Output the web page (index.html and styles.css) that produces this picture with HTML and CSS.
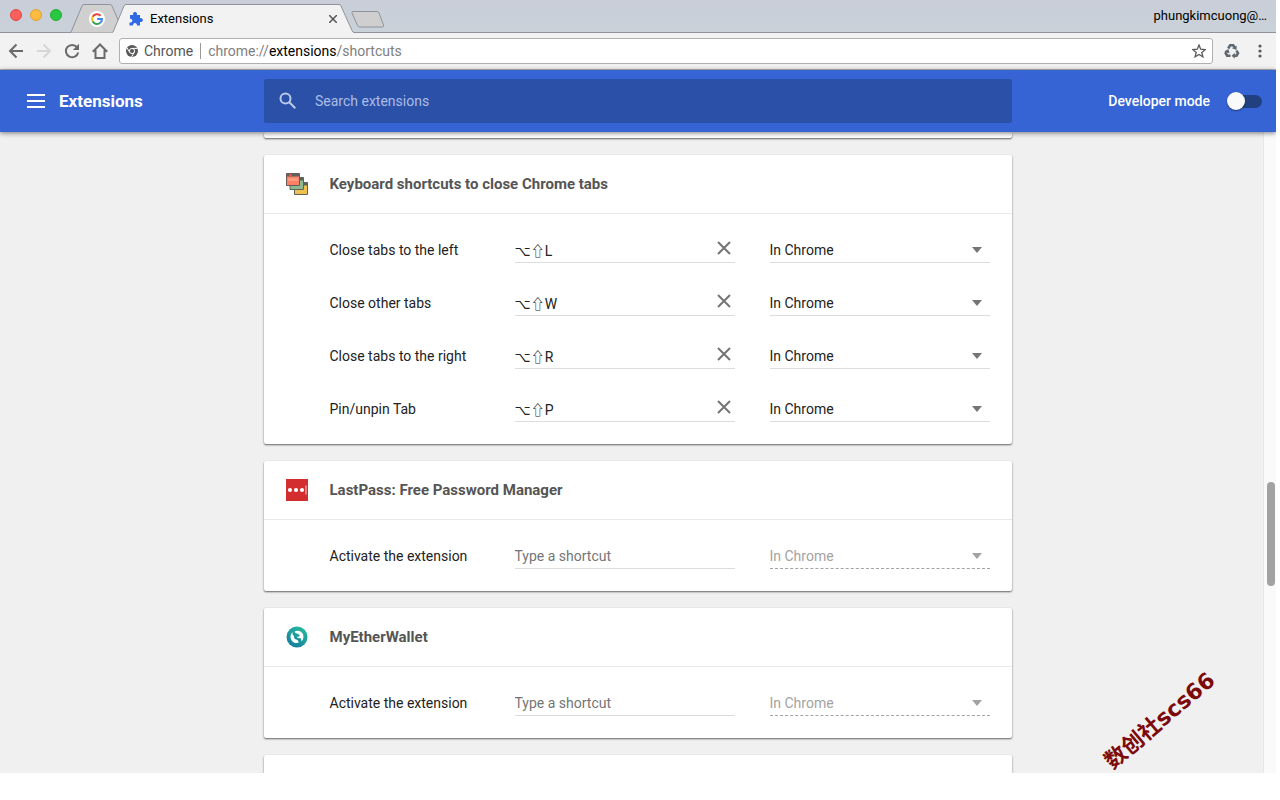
FILE: index.html
```html
<!DOCTYPE html>
<html lang="en">

<head>
    <meta charset="UTF-8">
    <meta name="viewport" content="width=device-width, initial-scale=1.0">
    <title>Extensions</title>
    <link rel="stylesheet" href="styles.css">
</head>

<body>
    <div class="window">
        <div class="titlebar">
            <div class="lights">
                <button class="light red" aria-label="Close"></button>
                <button class="light yellow" aria-label="Minimize"></button>
                <button class="light green" aria-label="Zoom"></button>
            </div>
            <div class="tabs">
                <button class="tab small" aria-label="Google">
                    <svg class="tab-shape" viewBox="0 0 55 29"><path d="M0 28.5C1 28.5 1 28 1.500 27L12 2Q12.800 .5 14 .5H40Q41.500 .5 42 2L53 27Q53.500 28.500 55 28.500" fill="#d0d0d0" stroke="#8f9399"/></svg>
                    <svg class="favicon google" width="16" height="16" viewBox="0 0 16 16"><circle cx="8" cy="8" r="8" fill="#fff"/><g fill="none" stroke-width="2"><path d="M11.600 4.700A5 5 0 0 0 3.600 5.700" stroke="#ea4335"/><path d="M3.600 5.700A5 5 0 0 0 3.600 10.300" stroke="#fbbc05"/><path d="M3.600 10.300A5 5 0 0 0 11.300 11.800" stroke="#34a853"/><path d="M11.300 11.800A5 5 0 0 0 13 8H8.200" stroke="#4285f4"/></g></svg>
                </button>
                <div class="tab active">
                    <svg class="tab-shape" viewBox="0 0 242 29"><path d="M0 29V28.500Q1 28.500 1.500 27L12 2Q12.800 .5 14 .5H227Q228.500 .5 229 2L240 26.500Q241 28.500 242 28.500V29" fill="#f2f2f2"/><path d="M0 28.500Q1 28.500 1.500 27L12 2Q12.800 .5 14 .5H227Q228.500 .5 229 2L240 26.500Q241 28.500 242 28.500" fill="none" stroke="#8f9399"/></svg>
                    <svg class="favicon" width="14" height="14" viewBox="0 0 14 14" fill="#2f6ae4"><path d="M1 3h3.300a2 2 0 1 1 3.400 0H11v3.300a2 2 0 1 1 0 3.600V13.500H7.800a1.900 1.900 0 1 0-3.600 0H0.500V10.300a1.900 1.900 0 1 0 .5-3.500z"/></svg>
                    <span class="tab-title">Extensions</span>
                    <button class="tab-close" aria-label="Close tab"><svg width="8" height="8" viewBox="0 0 8 8" stroke="#555" stroke-width="1.500"><path d="M0 0L8 8M8 0L0 8"/></svg></button>
                </div>
                <button class="new-tab" aria-label="New tab"><svg width="34" height="17" viewBox="0 0 34 17"><path d="M2 .5H26Q27.500 .5 28 2L32.500 14Q33 16 31.500 16H9Q7 16 6.500 14.500L1 2Q.500 .5 2 .5Z" fill="#cfcfcf" stroke="#8f9399"/></svg></button>
            </div>
            <span class="profile">phungkimcuong@…</span>
        </div>

        <div class="toolbar">
            <div class="nav">
                <button aria-label="Back"><svg width="16" height="16" viewBox="0 0 16 16" fill="none" stroke="#6a6a6a" stroke-width="2"><path d="M15 8H2.500M8.500 1.500L2 8L8.500 14.500"/></svg></button>
                <button aria-label="Forward"><svg width="16" height="16" viewBox="0 0 16 16" fill="none" stroke="#d6d6d6" stroke-width="2"><path d="M1 8H13.500M7.500 1.500L14 8L7.500 14.500"/></svg></button>
                <button aria-label="Reload"><svg width="16" height="16" viewBox="0 0 16 16"><path d="M13 4.200A6.200 6.200 0 1 0 14.200 9.500" fill="none" stroke="#6a6a6a" stroke-width="2"/><path d="M15 .8V7H8.800z" fill="#6a6a6a"/></svg></button>
                <button aria-label="Home"><svg width="16" height="16" viewBox="0 0 16 16" fill="none" stroke="#6a6a6a" stroke-width="2"><path d="M.800 8.700L8 1.500L15.200 8.700M3.500 7V15H12.500V7"/></svg></button>
            </div>
            <div class="omnibox">
                <svg width="12" height="12" viewBox="0 0 12 12"><circle cx="6" cy="6" r="6" fill="#5a5a5a"/><circle cx="6" cy="6" r="2.600" fill="#5a5a5a" stroke="#fff" stroke-width="1"/><path d="M6 3.400H11.500M3.700 7.300L1 2.800M8.300 7.300L5.500 12" stroke="#fff" stroke-width="1"/></svg>
                <span class="scheme-name">Chrome</span>
                <a class="url" href="#">chrome://<b>extensions</b>/shortcuts</a>
                <button aria-label="Bookmark"><svg width="14" height="14" viewBox="0 0 14 14"><path d="M7 1L8.700 5.200L13.200 5.500L9.800 8.400L10.900 12.800L7 10.400L3.100 12.800L4.200 8.400L.800 5.500L5.300 5.200z" fill="none" stroke="#5a5a5a" stroke-width="1.300"/></svg></button>
            </div>
            <button class="recycle" aria-label="Recycle"><svg width="16" height="16" viewBox="0 0 16 16"><g fill="none" stroke="#5f6870" stroke-width="2.600"><path d="M4.200 5.500L6.200 2.200H9.200L10.400 4.300"/><path d="M12.500 7.500L14 10.300L12.500 12.700H10.200"/><path d="M6.500 12.700H3.200L1.700 10.300L2.900 8.300"/></g><path d="M8 5.200L12.600 2.500V7zM10.800 9.700V15.800L7.600 12.700zM.300 8.500L4.300 6L5.600 10.200z" fill="#5f6870"/></svg></button>
            <button class="more" aria-label="Menu"><svg width="4" height="14" viewBox="0 0 4 14" fill="#5a5a5a"><circle cx="2" cy="2" r="1.600"/><circle cx="2" cy="7" r="1.600"/><circle cx="2" cy="12" r="1.600"/></svg></button>
        </div>

        <header class="header">
            <div class="header-left">
                <button class="menu" aria-label="Main menu"><svg width="18" height="14" viewBox="0 0 18 14" fill="#fff"><path d="M0 0H18V2H0zM0 6H18V8H0zM0 12H18V14H0z"/></svg></button>
                <h1>Extensions</h1>
            </div>
            <label class="search">
                <svg width="18" height="18" viewBox="0 0 18 18" fill="none" stroke="#bccaea" stroke-width="2"><circle cx="6.500" cy="6.500" r="5"/><path d="M10.300 10.300L16.300 16.300"/></svg>
                <input type="search" placeholder="Search extensions" aria-label="Search extensions">
            </label>
            <label class="dev-mode">
                Developer mode
                <input type="checkbox" class="toggle">
            </label>
        </header>

        <div class="content">
            <main class="cards">
                <section class="card previous"></section>

                <section class="card">
                    <div class="card-head">
                        <svg width="24" height="24" viewBox="0 0 24 24"><g stroke="#5c6656" stroke-width="1"><path d="M9.500 11.500H22.500V22.500H9.500z" fill="#efc04f"/><path d="M18 10.500H22.500V13H18z" fill="#59615a"/><path d="M5 6.500H18.500V17.500H5z" fill="#8db990"/><path d="M14 5.500H18.500V8H14z" fill="#59615a"/></g><path d="M1.500 1.500H14.500V13.500H1.500z" fill="#fb8065" stroke="#6b5a55"/><path d="M2 2H14V4.500H2z" fill="#5c6361"/><path d="M4 2H7V4.500H4z" fill="#e4513a"/><path d="M3 6H13V9H3z" fill="#ff9a7c"/></svg>
                        <h2>Keyboard shortcuts to close Chrome tabs</h2>
                    </div>
                    <div class="card-body">
                        <div class="row">
                            <label for="key1">Close tabs to the left</label>
                            <div class="field"><input type="text" id="key1" value="⌥⇧L"><button class="clear" aria-label="Clear"><svg width="14" height="14" viewBox="0 0 14 14" stroke="#757575" stroke-width="2"><path d="M1 1L13 13M13 1L1 13"/></svg></button></div>
                            <div class="field scope"><select aria-label="Scope"><option>In Chrome</option><option>Global</option></select></div>
                        </div>
                        <div class="row">
                            <label for="key2">Close other tabs</label>
                            <div class="field"><input type="text" id="key2" value="⌥⇧W"><button class="clear" aria-label="Clear"><svg width="14" height="14" viewBox="0 0 14 14" stroke="#757575" stroke-width="2"><path d="M1 1L13 13M13 1L1 13"/></svg></button></div>
                            <div class="field scope"><select aria-label="Scope"><option>In Chrome</option><option>Global</option></select></div>
                        </div>
                        <div class="row">
                            <label for="key3">Close tabs to the right</label>
                            <div class="field"><input type="text" id="key3" value="⌥⇧R"><button class="clear" aria-label="Clear"><svg width="14" height="14" viewBox="0 0 14 14" stroke="#757575" stroke-width="2"><path d="M1 1L13 13M13 1L1 13"/></svg></button></div>
                            <div class="field scope"><select aria-label="Scope"><option>In Chrome</option><option>Global</option></select></div>
                        </div>
                        <div class="row">
                            <label for="key4">Pin/unpin Tab</label>
                            <div class="field"><input type="text" id="key4" value="⌥⇧P"><button class="clear" aria-label="Clear"><svg width="14" height="14" viewBox="0 0 14 14" stroke="#757575" stroke-width="2"><path d="M1 1L13 13M13 1L1 13"/></svg></button></div>
                            <div class="field scope"><select aria-label="Scope"><option>In Chrome</option><option>Global</option></select></div>
                        </div>
                    </div>
                </section>

                <section class="card">
                    <div class="card-head">
                        <svg width="24" height="24" viewBox="0 0 24 24"><path d="M1 1H23V23H1z" fill="#d32d2f"/><g fill="#fff"><circle cx="5" cy="12" r="2.100"/><circle cx="11" cy="12" r="2.100"/><circle cx="17" cy="12" r="2.100"/><path d="M20.500 7.500H21.500V16.500H20.500z" opacity=".8"/></g></svg>
                        <h2>LastPass: Free Password Manager</h2>
                    </div>
                    <div class="card-body">
                        <div class="row">
                            <label for="key5">Activate the extension</label>
                            <div class="field"><input type="text" id="key5" placeholder="Type a shortcut"></div>
                            <div class="field scope disabled"><select aria-label="Scope" disabled><option>In Chrome</option></select></div>
                        </div>
                    </div>
                </section>

                <section class="card">
                    <div class="card-head">
                        <svg width="24" height="24" viewBox="0 0 24 24"><defs><linearGradient id="mew" x1="0" y1="1" x2=".6" y2="0"><stop offset="0" stop-color="#15759f"/><stop offset="1" stop-color="#24b59c"/></linearGradient></defs><circle cx="12" cy="12" r="10.500" fill="url(#mew)"/><path d="M7.500 7C4.500 10 5 15 8.500 17.200C11 18.600 13 18 14 17.200C12.500 16.500 13.500 15.500 12 14.800C9.500 14.200 8.500 12.500 9 11C7.500 10 7.200 8.500 7.500 7z" fill="#fff"/><path d="M9.500 6.800C12 5 16 5.800 17.800 8.800C19.200 11.500 18.300 15 16.500 16.500C16.800 14.500 15.500 14.200 15.800 13C14.500 13.500 12 13 11.800 11.800C13.500 12 15.300 11.300 14.500 10C13.500 8.500 10.500 9 9.500 6.800z" fill="#fff"/></svg>
                        <h2>MyEtherWallet</h2>
                    </div>
                    <div class="card-body">
                        <div class="row">
                            <label for="key6">Activate the extension</label>
                            <div class="field"><input type="text" id="key6" placeholder="Type a shortcut"></div>
                            <div class="field scope disabled"><select aria-label="Scope" disabled><option>In Chrome</option></select></div>
                        </div>
                    </div>
                </section>

                <section class="card next"></section>
            </main>
            <div class="scrollbar"><div class="thumb"></div></div>
            <div class="watermark">数创社scs66</div>
        </div>
    </div>
</body>

</html>
```
FILE: styles.css
```css
* {
    box-sizing: border-box;
}

body {
    margin: 0;
    background: #fff;
    color: #222;
    font-family: Roboto, "Noto Sans CJK SC", sans-serif;
    font-size: 14px;
}

button {
    padding: 0;
    border: none;
    background: none;
    display: flex;
    align-items: center;
    justify-content: center;
}

input, select {
    font: inherit;
    color: inherit;
    border: none;
    background: none;
    outline: none;
    padding: 0;
    margin: 0;
    min-width: 0;
}

svg {
    flex: none;
    display: block;
}

.window {
    display: flex;
    flex-direction: column;
    height: calc(100vh - 27px);
    margin-right: 4px;
    overflow: hidden;
}

/* title bar */
.titlebar {
    display: flex;
    height: 33px;
    flex: none;
    background: linear-gradient(#c9ced8, #c9d1d9);
    border-bottom: 1px solid #8f9399;
}

.lights {
    display: flex;
    gap: 8px;
    width: 70px;
    padding: 9px 0 0 10px;
}

.light {
    width: 12px;
    height: 12px;
    border-radius: 50%;
    border: 1px solid #e2463f;
    background: #fc605c;
}

.yellow {
    background: #fdbc40;
    border-color: #dfa034;
}

.green {
    background: #28c840;
    border-color: #1fab32;
}

.tabs {
    display: flex;
    height: 29px;
    margin-top: 4px;
    flex: 1;
}

.tab {
    position: relative;
    display: flex;
    align-items: center;
    height: 29px;
}

.small {
    width: 55px;
    padding-right: 2px;
}

.active {
    width: 242px;
    margin-left: -13px;
    padding: 0 17px;
}

.tab-shape {
    position: absolute;
    inset: 0;
    width: 100%;
    height: 29px;
}

.favicon {
    position: relative;
}

.tab-title {
    position: relative;
    flex: 1;
    margin-left: 7px;
    font-size: 12px;
    color: #000;
}

.tab-title, .profile {
    font-size: 13px;
}

.tab-close {
    position: relative;
}

.new-tab {
    height: 17px;
    margin: 7px 0 0 -3px;
}

.profile {
    padding: 8px 9px 0 0;
    line-height: 16px;
    color: #000;
}

/* toolbar */
.toolbar {
    display: flex;
    align-items: center;
    height: 37px;
    flex: none;
    padding: 0 14px 0 8px;
    background: #f2f2f2;
    border-bottom: 1px solid #b6b6b6;
}

.nav {
    display: flex;
    gap: 12px;
}

.omnibox {
    display: flex;
    align-items: center;
    flex: 1;
    height: 26px;
    margin: 0 11px;
    padding: 0 6px;
    background: #fff;
    border: 1px solid #b0b0b0;
    border-radius: 3px;
}

.scheme-name {
    margin-left: 6px;
    padding-right: 7px;
    border-right: 1px solid #999;
    color: #555;
}

.url {
    flex: 1;
    padding-left: 7px;
    color: #808080;
    text-decoration: none;
}

.url b {
    font-weight: 400;
    color: #000;
}

.more {
    margin-left: 18px;
}

/* page header */
.header {
    position: relative;
    z-index: 1;
    display: grid;
    grid-template-columns: 1fr minmax(0, 748px) 1fr;
    align-items: center;
    height: 62px;
    flex: none;
    background: #3664d4;
    color: #fff;
    box-shadow: 0 1px 5px rgba(0, 0, 0, 0.5);
}

.header-left {
    display: flex;
    align-items: center;
    gap: 14px;
    padding-left: 27px;
}

.header h1 {
    margin: 0;
    font-size: 17px;
    font-weight: 700;
}

.search {
    display: flex;
    align-items: center;
    height: 44px;
    padding: 0 15px;
    gap: 18px;
    background: #2a50a8;
    border-radius: 2px;
}

.search input {
    flex: 1;
}

.search input::placeholder {
    color: #abbde6;
    opacity: 1;
}

.dev-mode {
    display: flex;
    align-items: center;
    justify-content: flex-end;
    gap: 17px;
    padding-right: 14px;
    font-weight: 500;
}

.toggle {
    appearance: none;
    position: relative;
    width: 35px;
    height: 13px;
    border-radius: 7px;
    background: #20407f;
}

.toggle::before {
    content: "";
    position: absolute;
    left: 0;
    top: -3px;
    width: 18px;
    height: 18px;
    border-radius: 50%;
    background: #fafafa;
    box-shadow: 0 1px 2px rgba(0, 0, 0, 0.4);
}

/* cards */
.content {
    position: relative;
    display: flex;
    flex: 1;
    min-height: 0;
    padding-left: 12px;
    background: #f0f0f0;
}

.cards {
    display: flex;
    flex-direction: column;
    flex: 1;
    gap: 17px;
    max-width: 748px;
    margin: 0 auto;
}

.card {
    flex: none;
    background: #fff;
    border-radius: 2px;
    box-shadow: 0 1px 2px rgba(0, 0, 0, 0.6);
}

.previous {
    height: 6px;
}

.next {
    height: 60px;
}

.card-head {
    display: flex;
    align-items: center;
    gap: 21px;
    height: 59px;
    padding-left: 21px;
    border-bottom: 1px solid #e9e9e9;
}

.card-head h2 {
    margin: 0;
    padding-bottom: 1px;
    font-size: 15px;
    font-weight: 700;
    color: #555;
}

.card-body {
    display: flex;
    flex-direction: column;
    gap: 26px;
    padding: 22px 22px 22px 66px;
}

.row {
    display: grid;
    grid-template-columns: 150px 1fr 1fr;
    column-gap: 35px;
    align-items: center;
    height: 27px;
}

.field {
    position: relative;
    display: flex;
    align-items: center;
    height: 27px;
    border-bottom: 1px solid #dcdcdc;
}

.field input {
    flex: 1;
    padding-top: 2px;
    font-family: Roboto, "Noto Sans CJK JP", "DejaVu Sans", sans-serif;
}

.field input::placeholder {
    color: #757575;
    opacity: 1;
}

.clear {
    margin-right: 4px;
    padding-bottom: 2px;
}

.field select {
    appearance: none;
    flex: 1;
    padding-top: 1px;
    opacity: 1;
}

.scope::after {
    content: "";
    position: absolute;
    right: 8px;
    top: 11px;
    border: 5px solid transparent;
    border-top: 6px solid #757575;
    border-bottom: none;
    pointer-events: none;
}

.disabled {
    color: #a3a3a3;
    border-bottom: 1px dashed #a3a3a3;
}

.disabled::after {
    border-top-color: #a3a3a3;
}

.scrollbar {
    width: 13px;
    padding: 350px 1px 0 3px;
    background: #fafafa;
    border-left: 1px solid #e6e6e6;
}

.thumb {
    height: 104px;
    border-radius: 4px;
    background: #a2a2a2;
}

.watermark {
    position: absolute;
    right: 48px;
    bottom: 40px;
    color: #7d0a0a;
    font-family: "DejaVu Sans", "Noto Sans CJK SC", sans-serif;
    font-size: 22px;
    font-weight: 700;
    line-height: 24px;
    transform: rotate(-40deg);
}
```
